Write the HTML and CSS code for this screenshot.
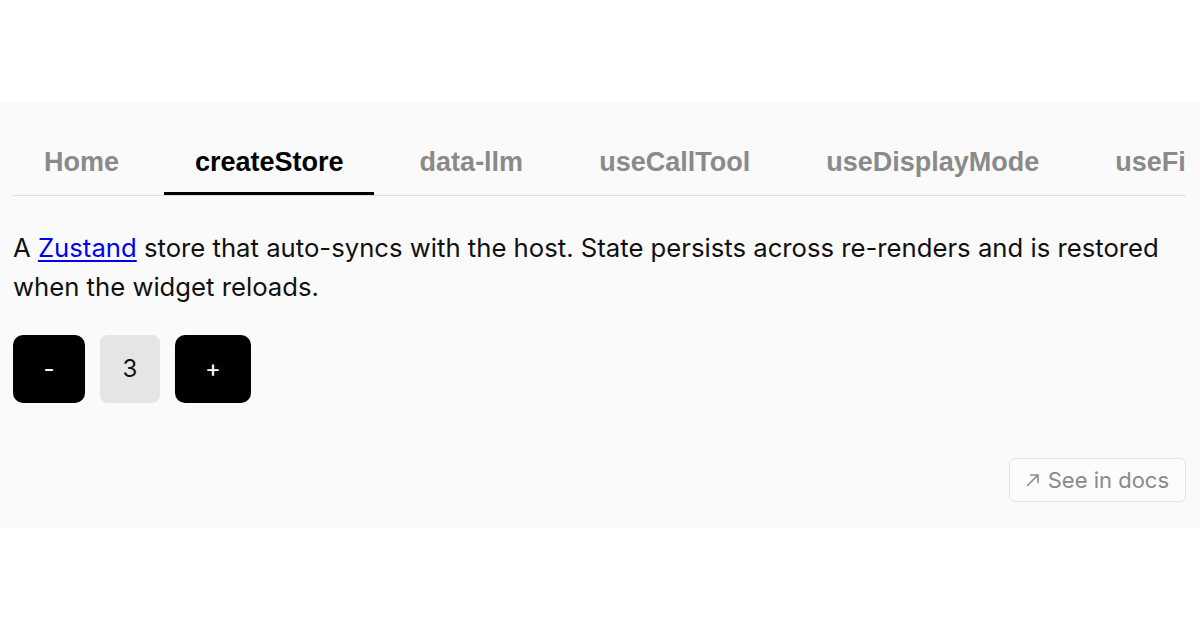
FILE: index.html
```html
<!DOCTYPE html>
<html lang="en">
<head>
<meta charset="utf-8">
<title>createStore</title>
<link rel="stylesheet" href="styles.css">
</head>
<body>
<main class="panel">
  <nav class="tabs">
    <a class="tab">Home</a>
    <a class="tab active">createStore</a>
    <a class="tab">data-llm</a>
    <a class="tab">useCallTool</a>
    <a class="tab">useDisplayMode</a>
    <a class="tab">useFiles</a>
    <a class="tab">useLayout</a>
  </nav>
  <p class="desc">A <a class="link" href="#">Zustand</a> store that auto-syncs with the host. State persists across re-renders and is restored when the widget reloads.</p>
  <div class="counter">
    <button class="btn minus">-</button>
    <span class="count">3</span>
    <button class="btn plus">+</button>
  </div>
  <div class="footer">
    <a class="docs" href="#"><svg class="arrow" width="16" height="16" viewBox="0 0 16 16" aria-hidden="true"><path d="M2.5 13.5 L13 3 M5.5 3 H13 V10.5" fill="none" stroke="currentColor" stroke-width="1.6" stroke-linecap="round" stroke-linejoin="round"/></svg>See in docs</a>
  </div>
</main>
</body>
</html>
```

FILE: styles.css
```css
html, body {
  margin: 0;
  padding: 0;
  background: #ffffff;
}
body {
  height: 630px;
  display: flex;
  align-items: center;
  font-family: "Inter", "Liberation Sans", sans-serif;
}
.panel {
  box-sizing: border-box;
  width: 100%;
  height: 425px;
  background: #fafafa;
  padding: 24px 14px 26px 13px;
  display: flex;
  flex-direction: column;
}
.tabs {
  display: flex;
  gap: 15px;
  overflow: hidden;
  border-bottom: 1px solid #e0e0e0;
  white-space: nowrap;
}
.tab {
  flex: none;
  padding: 19px 30px 14px 31px;
  line-height: 32px;
  font-family: "Liberation Sans", Arial, sans-serif;
  font-weight: 700;
  font-size: 27px;
  color: #8a8a8a;
  border-bottom: 3px solid transparent;
}
.tab.active {
  color: #000;
  border-bottom-color: #000;
}
.desc {
  margin: 32px 0 0;
  font-size: 25.7px;
  line-height: 39px;
  color: #111;
}
.link {
  color: #0000ee;
  text-decoration: underline;
  text-underline-offset: 3px;
  text-decoration-thickness: 1.5px;
}
.counter {
  margin-top: 29px;
  display: flex;
  gap: 15px;
  height: 68px;
}
.btn {
  border: none;
  font-family: inherit;
  font-size: 24px;
  color: #fff;
  background: #000;
  border-radius: 10px;
  height: 68px;
  cursor: pointer;
}
.minus { width: 72px; }
.plus { width: 76px; }
.count {
  width: 60px;
  height: 68px;
  background: #e5e5e5;
  border-radius: 8px;
  display: flex;
  align-items: center;
  justify-content: center;
  font-size: 24px;
  color: #111;
}
.footer {
  margin-top: auto;
  display: flex;
  justify-content: flex-end;
}
.docs {
  display: flex;
  align-items: center;
  gap: 7px;
  height: 44px;
  box-sizing: border-box;
  padding: 0 16px 0 15px;
  border: 1px solid #e4e4e4;
  border-radius: 6px;
  background: #fcfcfc;
  color: #8a8a8a;
  font-size: 22px;
  text-decoration: none;
}
.arrow {
  flex: none;
}
```
